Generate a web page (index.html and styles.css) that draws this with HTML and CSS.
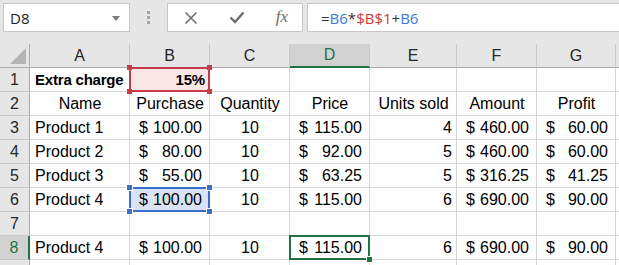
FILE: index.html
```html
<!DOCTYPE html>
<html lang="en">
<head>
    <meta charset="UTF-8">
    <title>Extra charge</title>
    <link rel="stylesheet" href="styles.css">
</head>
<body>
    <div class="topbar">
        <div class="namebox">
            <span>D8</span>
            <svg class="drop" width="8" height="5" viewBox="0 0 8 5"><path d="M0 0h8L4 5z" fill="#7a7a7a"/></svg>
        </div>
        <div class="grip"><i></i><i></i><i></i></div>
        <div class="fxbar">
            <svg width="14" height="14" viewBox="0 0 14 14"><path d="M1.5 1.5l11 11M12.5 1.5l-11 11" stroke="#6d6d6d" stroke-width="1.6"/></svg>
            <svg width="16" height="13" viewBox="0 0 16 13"><path d="M1.5 6.5l4.5 4.5L14.5 1.5" stroke="#6d6d6d" stroke-width="2.4" fill="none"/></svg>
            <span class="fx">fx</span>
        </div>
        <div class="formula">=<span class="rb">B6</span>*<span class="rr">$B$1</span>+<span class="rb">B6</span></div>
    </div>

    <div class="sheet">
        <div class="corner"><svg width="16" height="16" viewBox="0 0 16 16"><path d="M16 0V16H0z" fill="#b5b5b5"/></svg></div>
        <div class="ch">A</div>
        <div class="ch">B</div>
        <div class="ch">C</div>
        <div class="ch sel">D</div>
        <div class="ch">E</div>
        <div class="ch">F</div>
        <div class="ch">G</div>
        <div class="ch end"></div>

        <div class="rh">1</div>
        <div class="c bold">Extra charge</div>
        <div class="c right bold pick red">15%<i class="h tl"></i><i class="h tr"></i><i class="h bl"></i><i class="h br"></i></div>
        <div class="c"></div><div class="c"></div><div class="c"></div><div class="c"></div><div class="c"></div><div class="c"></div>

        <div class="rh">2</div>
        <div class="c center">Name</div>
        <div class="c center">Purchase</div>
        <div class="c center">Quantity</div>
        <div class="c center">Price</div>
        <div class="c center">Units sold</div>
        <div class="c center">Amount</div>
        <div class="c center">Profit</div>
        <div class="c"></div>

        <div class="rh">3</div>
        <div class="c">Product 1</div>
        <div class="c acct"><span>$</span><span>100.00</span></div>
        <div class="c center">10</div>
        <div class="c acct"><span>$</span><span>115.00</span></div>
        <div class="c right">4</div>
        <div class="c acct"><span>$</span><span>460.00</span></div>
        <div class="c acct"><span>$</span><span>60.00</span></div>
        <div class="c"></div>

        <div class="rh">4</div>
        <div class="c">Product 2</div>
        <div class="c acct"><span>$</span><span>80.00</span></div>
        <div class="c center">10</div>
        <div class="c acct"><span>$</span><span>92.00</span></div>
        <div class="c right">5</div>
        <div class="c acct"><span>$</span><span>460.00</span></div>
        <div class="c acct"><span>$</span><span>60.00</span></div>
        <div class="c"></div>

        <div class="rh">5</div>
        <div class="c">Product 3</div>
        <div class="c acct"><span>$</span><span>55.00</span></div>
        <div class="c center">10</div>
        <div class="c acct"><span>$</span><span>63.25</span></div>
        <div class="c right">5</div>
        <div class="c acct"><span>$</span><span>316.25</span></div>
        <div class="c acct"><span>$</span><span>41.25</span></div>
        <div class="c"></div>

        <div class="rh">6</div>
        <div class="c">Product 4</div>
        <div class="c acct pick blue"><span>$</span><span>100.00</span><i class="h tl"></i><i class="h tr"></i><i class="h bl"></i><i class="h br"></i></div>
        <div class="c center">10</div>
        <div class="c acct"><span>$</span><span>115.00</span></div>
        <div class="c right">6</div>
        <div class="c acct"><span>$</span><span>690.00</span></div>
        <div class="c acct"><span>$</span><span>90.00</span></div>
        <div class="c"></div>

        <div class="rh">7</div>
        <div class="c"></div><div class="c"></div><div class="c"></div><div class="c"></div><div class="c"></div><div class="c"></div><div class="c"></div><div class="c"></div>

        <div class="rh sel">8</div>
        <div class="c">Product 4</div>
        <div class="c acct"><span>$</span><span>100.00</span></div>
        <div class="c center">10</div>
        <div class="c acct pick green"><span>$</span><span>115.00</span><i class="h br"></i></div>
        <div class="c right">6</div>
        <div class="c acct"><span>$</span><span>690.00</span></div>
        <div class="c acct"><span>$</span><span>90.00</span></div>
        <div class="c"></div>

        <div class="rh"></div>
        <div class="c"></div><div class="c"></div><div class="c"></div><div class="c"></div><div class="c"></div><div class="c"></div><div class="c"></div><div class="c"></div>
    </div>
</body>
</html>
```

FILE: styles.css
```css
body { margin: 0; background: #e6e6e6; font-family: 'Liberation Sans', Arial, sans-serif; overflow: hidden; }

.topbar { height: 44px; box-sizing: border-box; padding: 3px 0 0 3px; display: flex; align-items: flex-start; }
.namebox { width: 127px; height: 29px; box-sizing: border-box; background: white; border: 1px solid #c6c6c6; display: flex; align-items: center; justify-content: space-between; padding: 0 9px 0 6px; font-family: 'Open Sans', sans-serif; font-size: 15px; color: #222; }
.drop { margin-top: 1px; }
.grip { width: 37px; height: 29px; display: flex; flex-direction: column; align-items: center; justify-content: center; gap: 2px; }
.grip i { display: block; width: 3px; height: 3px; background: #a6a6a6; }
.fxbar { width: 136px; height: 29px; box-sizing: border-box; background: white; border: 1px solid #c6c6c6; display: flex; align-items: center; justify-content: space-between; padding: 0 14px 0 16px; }
.fx { font-family: 'Liberation Serif', serif; font-style: italic; font-size: 17px; color: #6d6d6d; margin-top: -2px; }
.formula { flex: 1; height: 29px; box-sizing: border-box; margin-left: 4px; background: white; border: 1px solid #c6c6c6; border-right: none; padding-left: 13px; display: flex; align-items: center; font-family: 'Open Sans', sans-serif; font-size: 15px; color: #333; }
.rb { color: #3b78d8; }
.rr { color: #cc3a3a; }

.sheet { display: grid; grid-template-columns: 30px 100px 80px 80px 80px 87px 80px 79px 1fr; grid-template-rows: repeat(10, 24px); background: white; font-size: 16px; color: #000; }
.corner { background: #e6e6e6; border-right: 1px solid #ababab; border-bottom: 1px solid #ababab; box-sizing: border-box; display: flex; align-items: flex-end; justify-content: flex-end; padding: 0 3px 3px 0; }
.ch { background: #e6e6e6; border-right: 1px solid #c8c8c8; border-bottom: 1px solid #ababab; box-sizing: border-box; display: flex; align-items: center; justify-content: center; color: #262626; }
.ch.sel { background: #d2d2d2; color: #217346; border-bottom: 2px solid #217346; }
.ch.end { border-right: none; }
.rh { background: #e6e6e6; border-right: 1px solid #ababab; border-bottom: 1px solid #c8c8c8; box-sizing: border-box; display: flex; align-items: center; justify-content: center; color: #262626; }
.rh.sel { background: #d2d2d2; color: #217346; border-right: 2px solid #217346; }

.c { position: relative; border-right: 1px solid #d4d4d4; border-bottom: 1px solid #d4d4d4; box-sizing: border-box; display: flex; align-items: center; padding: 0 4px 0 5px; white-space: nowrap; }
.center { justify-content: center; }
.right { justify-content: flex-end; }
.bold { font-weight: bold; font-size: 15px; letter-spacing: -0.2px; }
.acct { justify-content: space-between; padding: 0 7px 0 9px; }

.pick::after { content: ""; position: absolute; left: -1px; top: -1px; right: -1px; bottom: -1px; border: 2px solid; pointer-events: none; }
.red { background: #f9e6e6; }
.red::after { border-color: #c43d4a; }
.blue { background: #d9e3f5; }
.blue::after { border-color: #3a6fc9; }
.green::after { border-color: #217346; }
.h { position: absolute; width: 5px; height: 5px; z-index: 1; }
.red .h { background: #c43d4a; }
.blue .h { background: #3a6fc9; outline: 1px solid white; }
.green .h { background: #217346; outline: 1px solid white; }
.tl { left: -3px; top: -3px; }
.tr { right: -3px; top: -3px; }
.bl { left: -3px; bottom: -3px; }
.br { right: -3px; bottom: -3px; }
```
